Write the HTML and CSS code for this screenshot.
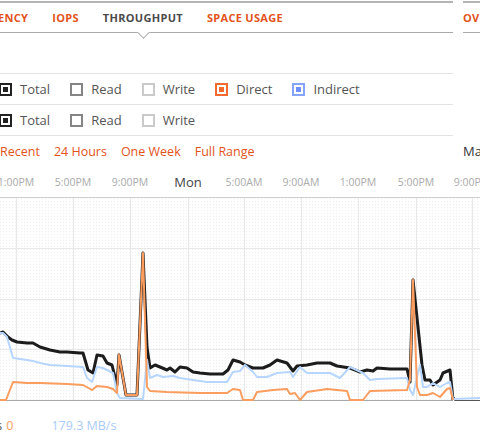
FILE: index.html
```html
<!DOCTYPE html>
<html lang="en">
<head>
  <meta charset="UTF-8">
  <title>Throughput</title>
  <link rel="stylesheet" href="styles.css">
</head>
<body>
  <div class="top">
    <!-- Main panel tabs -->
    <nav class="tabs">
      <a class="tab">Latency</a>
      <a class="tab">IOPS</a>
      <a class="tab active">Throughput</a>
      <a class="tab">Space Usage</a>
    </nav>
    <nav class="tabs side-tabs">
      <a class="tab">Overview</a>
    </nav>

    <!-- Series filters -->
    <div class="filters">
      <div class="filter-row">
        <label class="check"><span class="box total on"></span>Total</label>
        <label class="check"><span class="box read"></span>Read</label>
        <label class="check"><span class="box write"></span>Write</label>
        <label class="check"><span class="box direct on"></span>Direct</label>
        <label class="check"><span class="box indirect on"></span>Indirect</label>
      </div>
      <div class="filter-row">
        <label class="check"><span class="box total on"></span>Total</label>
        <label class="check"><span class="box read"></span>Read</label>
        <label class="check"><span class="box write"></span>Write</label>
      </div>
    </div>
    <div></div>

    <!-- Time range -->
    <div class="ranges">
      <a>Recent</a>
      <a>24 Hours</a>
      <a>One Week</a>
      <a>Full Range</a>
    </div>
    <div class="side-label">Max</div>
  </div>

  <svg class="chart" width="480" height="238" viewBox="0 166 480 238">
    <defs>
      <pattern id="dots" width="3" height="3" patternUnits="userSpaceOnUse">
        <rect x="0" y="0" width="1" height="1" fill="#f1f1f1"/>
      </pattern>
    </defs>

    <!-- axis labels -->
    <g class="axis-label">
      <text x="16" y="186">1:00PM</text>
      <text x="73" y="186">5:00PM</text>
      <text x="130" y="186">9:00PM</text>
      <text x="188" y="187" class="day">Mon</text>
      <text x="244" y="186">5:00AM</text>
      <text x="301" y="186">9:00AM</text>
      <text x="358" y="186">1:00PM</text>
      <text x="416" y="186">5:00PM</text>
      <text x="472" y="186">9:00PM</text>
    </g>

    <rect x="0" y="197" width="480" height="203" fill="url(#dots)"/>

    <!-- grid -->
    <g stroke="#e8e8e8" stroke-width="1">
      <path d="M0 248.5H480M0 299.5H480M0 349.5H480"/>
      <path d="M16.5 197V400M73.5 197V400M130.5 197V400M188.5 197V400M244.5 197V400M301.5 197V400M358.5 197V400M416.5 197V400M472.5 197V400"/>
    </g>
    <path d="M0 197.5H480" stroke="#cfcfcf"/>
    <path d="M0 400.5H453" stroke="#a8a8a8"/>
    <path d="M454.5 397V400.5H480" stroke="#555" fill="none"/>

    <!-- series -->
    <g fill="none" stroke-linejoin="round">
      <path stroke="#1c1c1c" stroke-width="3" d="M0,333 L3,332 L8,337 L12,340 L17,342 L27,343 L33,343 L40,347 L50,350 L60,352 L67,352 L80,353 L83,353 L88,370 L93,373 L97,355 L103,356 L107,363 L112,365 L115,377 L117,385 L119,355 L126,395 L137,395 L143,253 L147,347 L150,368 L155,365 L160,367 L167,370 L170,368 L175,372 L180,367 L187,368 L193,372 L200,373 L210,374 L223,374 L228,370 L233,360 L240,362 L245,365 L253,368 L263,368 L270,365 L277,360 L287,363 L293,371 L297,366 L307,365 L317,363 L330,363 L337,366 L350,368 L360,372 L367,370 L373,371 L377,368 L390,369 L407,369 L410,382 L413,280 L422,365 L425,380 L430,380 L433,385 L440,380 L443,373 L450,370 L453,400"/>
      <path stroke="#b7d6ff" stroke-width="2" d="M0,333 L3,333 L7,337 L13,358 L27,360 L33,361 L40,363 L50,365 L67,366 L83,367 L87,378 L92,382 L97,367 L103,368 L113,373 L117,393 L120,398 L143,399 L147,360 L150,378 L157,375 L163,377 L173,376 L180,378 L193,380 L207,382 L227,382 L233,372 L240,371 L245,365 L253,372 L257,377 L267,377 L277,373 L290,372 L293,377 L300,367 L307,373 L317,373 L330,373 L340,378 L350,367 L363,373 L370,380 L377,379 L407,378 L410,390 L413,395 L417,377 L420,365 L423,387 L427,387 L433,383 L440,387 L447,383 L450,382 L453,399 L480,398"/>
      <path stroke="#fb9d5e" stroke-width="2" d="M0,400 L6,400 L13,382 L27,383 L40,383 L67,384 L83,385 L92,390 L97,386 L107,387 L113,389 L117,393 L119,355 L126,395 L137,395 L143,253 L147,387 L150,391 L167,392 L200,393 L227,393 L233,389 L240,390 L243,400 L253,400 L257,392 L273,390 L287,389 L290,394 L295,393 L300,400 L307,392 L327,389 L347,391 L350,400 L363,400 L370,391 L407,390 L410,380 L413,280 L417,387 L420,395 L427,395 L433,393 L440,397 L447,389 L450,388 L453,400"/>
    </g>
  </svg>

  <!-- Current values -->
  <div class="legend">
    <span class="legend-name">Writes</span>
    <span class="legend-value direct">0</span>
    <span class="legend-value read">179.3 MB/s</span>
  </div>
</body>
</html>
```

FILE: styles.css
```css
body {
  margin: 0;
  overflow: hidden;
  font-family: 'Open Sans', sans-serif;
  color: #555;
  background: #fff;
}

/* Two column header: main panel + side panel */
.top {
  display: grid;
  grid-template-columns: 483px 1fr;
  column-gap: 10px;
  margin-left: -30px;
  margin-top: 1px;
}

/* Tabs */
.tabs {
  display: flex;
  align-items: stretch;
  gap: 24px;
  height: 29px;
  padding-left: 7px;
  border-top: 2px solid #b4b4b4;
  border-bottom: 1px solid #aaa;
}

.side-tabs {
  padding-left: 0;
}

.tab {
  position: relative;
  display: flex;
  align-items: center;
  font-size: 11px;
  font-weight: 700;
  letter-spacing: 0.3px;
  text-transform: uppercase;
  color: #e2531c;
  white-space: nowrap;
  cursor: pointer;
}

.tab.active {
  color: #4a4a4a;
}

/* little notch under the active tab */
.tab.active::after {
  content: "";
  position: absolute;
  left: 50%;
  bottom: -5px;
  width: 8px;
  height: 8px;
  margin-left: -4px;
  background: #fff;
  border-right: 1px solid #aaa;
  border-bottom: 1px solid #aaa;
  transform: rotate(45deg);
}

/* Filter rows */
.filters {
  margin-top: 40px;
  border-bottom: 1px solid #e4e4e4;
}

.filter-row {
  display: flex;
  align-items: center;
  gap: 20px;
  height: 30px;
  padding-left: 29px;
  border-top: 1px solid #e4e4e4;
}

.check {
  display: flex;
  align-items: center;
  gap: 8px;
  font-size: 13px;
  color: #555;
  cursor: pointer;
}

.box {
  box-sizing: border-box;
  width: 13px;
  height: 13px;
  padding: 2px;
  border: 2px solid #888;
  background-clip: content-box;
}

.box.total { border-color: #222; }
.box.total.on { background-color: #222; }
.box.read { border-color: #858585; }
.box.write { border-color: #cacaca; }
.box.direct { border-color: #f26a2e; }
.box.direct.on { background-color: #f26a2e; }
.box.indirect { border-color: #86a4ff; }
.box.indirect.on { background-color: #6f8fff; }

/* Time ranges */
.ranges {
  display: flex;
  align-items: center;
  gap: 14px;
  height: 30px;
  padding-left: 30px;
  font-size: 12.5px;
}

.ranges a {
  color: #e2531c;
  cursor: pointer;
}

.side-label {
  display: flex;
  align-items: center;
  font-size: 13px;
  color: #333;
}

/* Chart */
.chart {
  display: block;
}

.axis-label text {
  font-family: 'Open Sans', sans-serif;
  font-size: 10.5px;
  fill: #aaa;
  text-anchor: middle;
}

.axis-label text.day {
  font-size: 13px;
  fill: #444;
}

/* Legend */
.legend {
  display: flex;
  align-items: center;
  height: 18px;
  margin-top: 12px;
  margin-left: -35px;
  font-size: 12.5px;
}

.legend-name {
  color: #555;
  margin-right: 4px;
}

.legend-value.direct {
  color: #fb9d5e;
  margin-right: 38px;
}

.legend-value.read {
  color: #a9cbf7;
}
```
